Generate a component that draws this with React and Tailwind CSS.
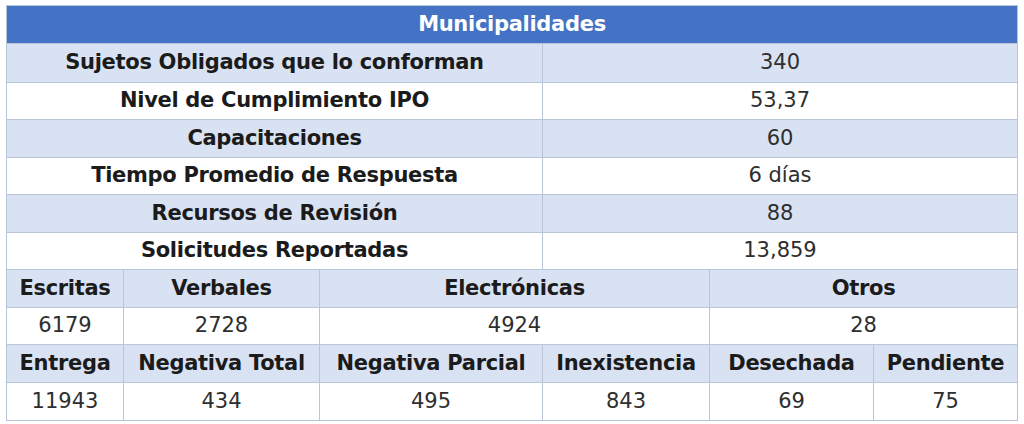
const topRows = [
  ['Sujetos Obligados que lo conforman', '340'],
  ['Nivel de Cumplimiento IPO', '53,37'],
  ['Capacitaciones', '60'],
  ['Tiempo Promedio de Respuesta', '6 días'],
  ['Recursos de Revisión', '88'],
  ['Solicitudes Reportadas', '13,859'],
]

const font = { fontFamily: '"DejaVu Sans", "Liberation Sans", sans-serif' }

function Cell({ span = '', shade, bold, children }) {
  return (
    <div className={`${span} flex items-center justify-center ${shade ? 'bg-[#d9e2f3]' : 'bg-white'} ${bold ? 'font-bold text-[#1b1b1b] text-[21px] tracking-[-0.3px]' : 'text-[#2e2e2e] text-[21px]'}`}>
      {children}
    </div>
  )
}

export default function App() {
  return (
    <div className="w-[1024px] h-[424px] bg-white pt-[5px] pl-[6px]" style={font}>
      <div className="grid w-[1012px] grid-cols-[116px_195px_222px_166px_163px_143px] grid-rows-[37px_38px_36px_37px_36px_37px_36px_37px_36px_37px_37px] gap-px p-px bg-[#b9c5d8]">
        <div className="col-span-6 flex items-center justify-center bg-[#4472c4] text-white font-bold text-[21px] tracking-[-0.3px]">Municipalidades</div>
        {topRows.map(([label, value], i) => (
          <div key={label} className="contents">
            <Cell span="col-span-3" shade={i % 2 === 0} bold>{label}</Cell>
            <Cell span="col-span-3" shade={i % 2 === 0}>{value}</Cell>
          </div>
        ))}
        <Cell shade bold>Escritas</Cell>
        <Cell shade bold>Verbales</Cell>
        <Cell span="col-span-2" shade bold>Electrónicas</Cell>
        <Cell span="col-span-2" shade bold>Otros</Cell>
        <Cell>6179</Cell>
        <Cell>2728</Cell>
        <Cell span="col-span-2">4924</Cell>
        <Cell span="col-span-2">28</Cell>
        <Cell shade bold>Entrega</Cell>
        <Cell shade bold>Negativa Total</Cell>
        <Cell shade bold>Negativa Parcial</Cell>
        <Cell shade bold>Inexistencia</Cell>
        <Cell shade bold>Desechada</Cell>
        <Cell shade bold>Pendiente</Cell>
        <Cell>11943</Cell>
        <Cell>434</Cell>
        <Cell>495</Cell>
        <Cell>843</Cell>
        <Cell>69</Cell>
        <Cell>75</Cell>
      </div>
    </div>
  )
}
